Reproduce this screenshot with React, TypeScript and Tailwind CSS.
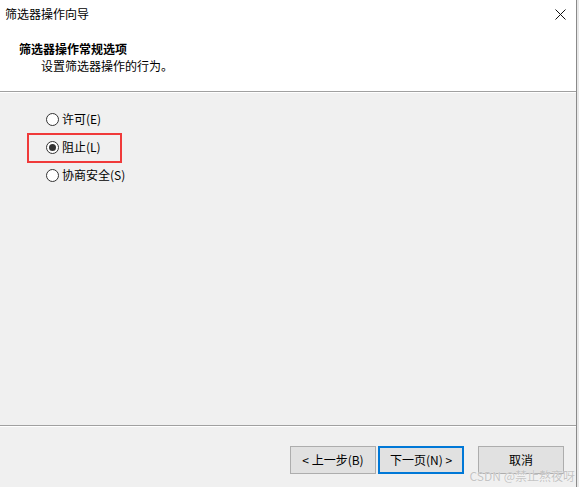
import React from "react";

const font = { fontFamily: '"Noto Sans CJK SC", "Microsoft YaHei", sans-serif' };

function Radio({ checked, label }: { checked?: boolean; label: string }) {
  return (
    <div className="flex items-center h-[28px]">
      <span className="w-[13px] h-[13px] rounded-full border border-[#333333] bg-white flex items-center justify-center">
        {checked && <span className="w-[7px] h-[7px] rounded-full bg-[#333333]" />}
      </span>
      <span className="ml-[3px] text-[12px] leading-[16px] text-black">{label}</span>
    </div>
  );
}

function Btn({ children, primary }: { children: React.ReactNode; primary?: boolean }) {
  return (
    <div
      className={
        "w-[86px] h-[28px] flex items-center justify-center text-[12px] text-black bg-[#e1e1e1] " +
        (primary ? "border-2 border-[#0078d7]" : "border border-[#adadad]")
      }
    >
      {children}
    </div>
  );
}

export default function App() {
  return (
    <div className="w-[579px] h-[487px] flex bg-white overflow-hidden relative" style={font}>
      <div className="w-[577px] h-full flex flex-col border-r border-[#8a8a8a]">
        <div className="bg-white">
          <div className="h-[28px] flex items-center justify-between pl-[5px] pr-[10px]">
            <span className="text-[12px] leading-[16px] text-black">筛选器操作向导</span>
            <svg width="11" height="11" viewBox="0 0 11 11">
              <path d="M0.5 0.5 L10.5 10.5 M10.5 0.5 L0.5 10.5" stroke="#111" strokeWidth="1" />
            </svg>
          </div>
          <div className="pt-[13px] pb-[17px] border-b border-[#a0a0a0]">
            <div className="pl-[19px] text-[12px] leading-[16px] font-bold text-black">筛选器操作常规选项</div>
            <div className="pl-[41px] mt-[1px] text-[12px] leading-[16px] text-black">设置筛选器操作的行为。</div>
          </div>
        </div>
        <div className="flex-1 bg-[#f0f0f0] flex flex-col border-t border-white">
          <div className="flex-1 border-b border-[#a0a0a0] pt-[12px] pl-[46px]">
            <Radio label="许可(E)" />
            <div className="relative">
              <Radio checked label="阻止(L)" />
              <div className="absolute left-[-19px] top-0 w-[95px] h-[30px] border-2 border-[#f03a3a]" />
            </div>
            <Radio label="协商安全(S)" />
          </div>
          <div className="h-[61px] border-t border-white flex justify-end items-start pt-[19px] pr-[12px]">
            <Btn>&lt; 上一步(B)</Btn>
            <div className="ml-[2px]">
              <Btn primary>下一页(N) &gt;</Btn>
            </div>
            <div className="ml-[14px]">
              <Btn>取消</Btn>
            </div>
          </div>
        </div>
      </div>
      <div className="w-[2px] h-full bg-[#e8e8e8]" />
      <div
        className="absolute right-[4px] bottom-[3px] text-[12px] leading-[16px] text-[#c4c4c4]"
        style={{ textShadow: "0 0 1px #ffffff" }}
      >
        CSDN @禁止熬夜呀
      </div>
    </div>
  );
}
